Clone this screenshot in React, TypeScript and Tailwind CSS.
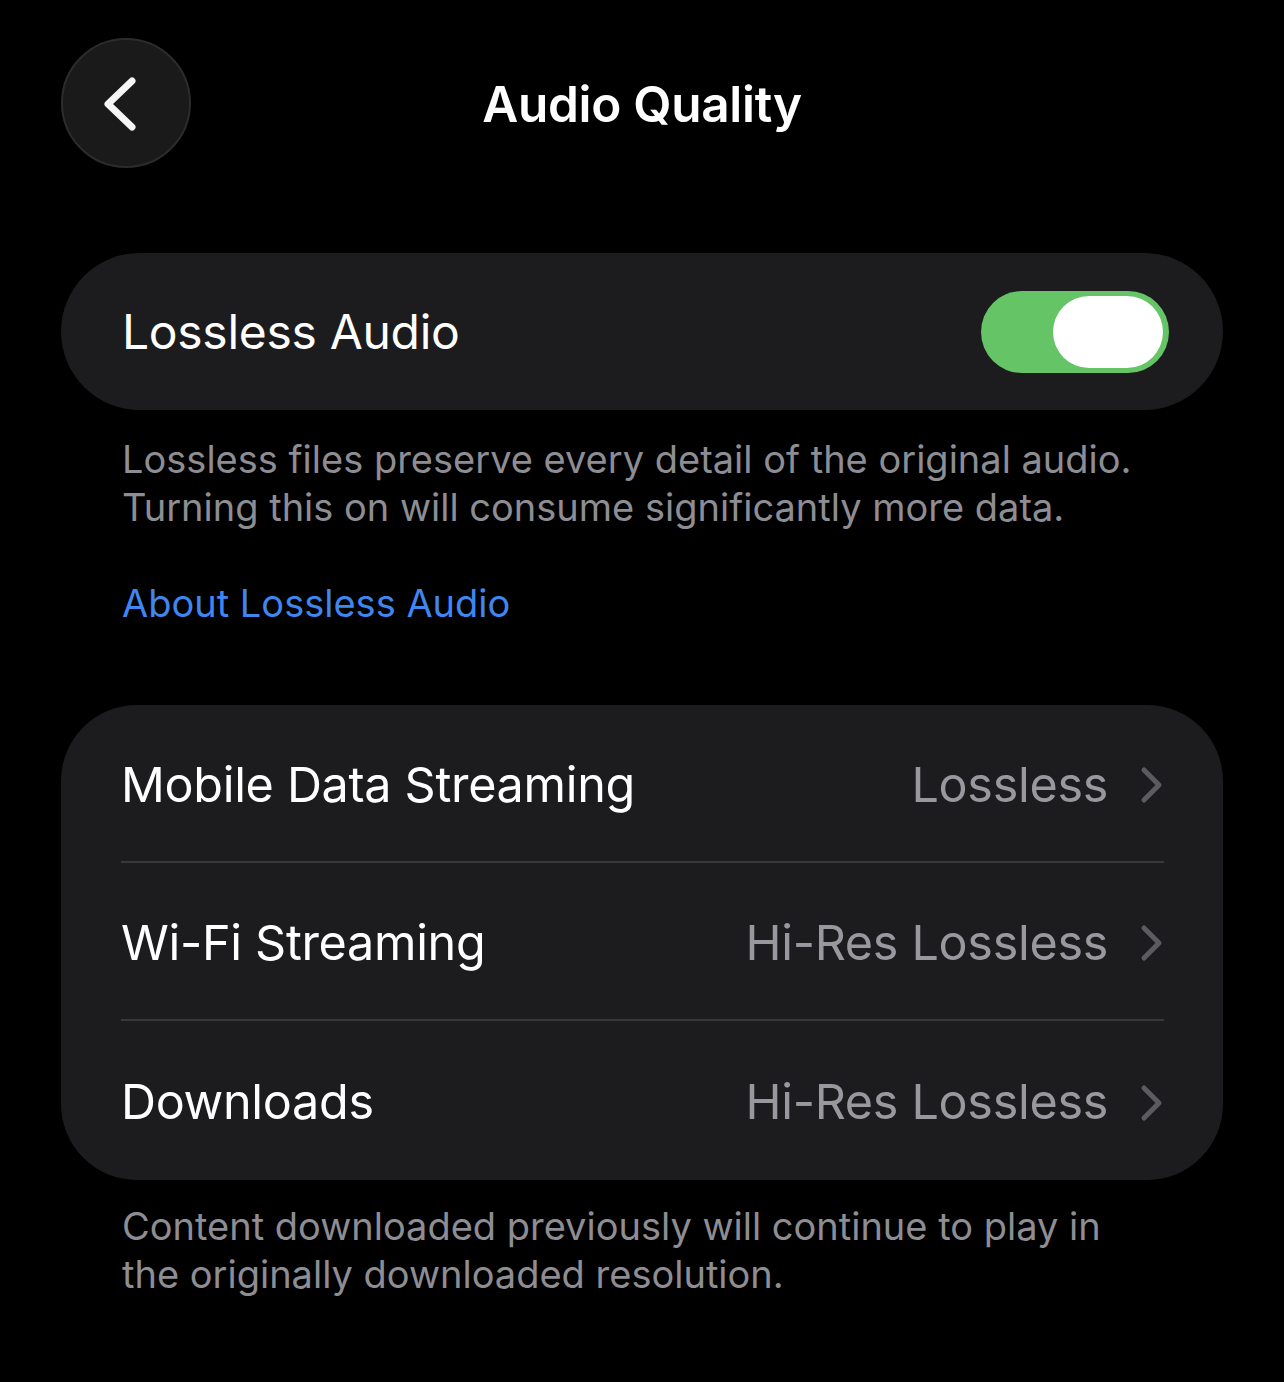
const font = { fontFamily: '"Inter", "Noto Sans", sans-serif' };

function Chevron() {
  return (
    <svg width="24" height="38" viewBox="0 0 24 38" fill="none" className="ml-[32px]">
      <path d="M4 4 L19 19 L4 34" stroke="#5b5b60" strokeWidth="5" strokeLinecap="round" strokeLinejoin="round" />
    </svg>
  );
}

function Row({ label, value, last }: { label: string; value: string; last?: boolean }) {
  return (
    <div className={"ml-[60px] mr-[59px] flex items-center pt-[4px] " + (last ? "h-[159px]" : "h-[158px] border-b-2 border-[#38383a]")}>
      <span className="flex-1 text-[48.5px] tracking-[-0.3px] text-white">{label}</span>
      <span className="text-[48.5px] tracking-[-0.3px] text-[#98989e]">{value}</span>
      <Chevron />
    </div>
  );
}

export default function App() {
  return (
    <div className="min-h-[1382px] w-[1284px] bg-black" style={font}>
      <div className="relative flex h-[206px] items-start justify-center pt-[38px]">
        <button className="absolute left-[61px] top-[38px] flex h-[130px] w-[130px] items-center justify-center rounded-full border-2 border-[#2c2c2e] bg-[#1a1a1a]">
          <svg width="40" height="60" viewBox="0 0 40 60" fill="none" className="-ml-[8px]">
            <path d="M30 8 L6 31 L30 54" stroke="#f5f5f5" strokeWidth="7" strokeLinecap="round" strokeLinejoin="round" />
          </svg>
        </button>
        <h1 className="mt-[37px] text-[49.5px] font-semibold leading-[58px] tracking-[-0.3px] text-white">Audio Quality</h1>
      </div>

      <div className="mx-[61px] mt-[47px] flex h-[157px] items-center rounded-[79px] bg-[#1c1c1e] pl-[61px] pr-[54px]">
        <span className="flex-1 text-[48px] tracking-[-0.3px] text-white">Lossless Audio</span>
        <div className="flex h-[82px] w-[188px] items-center justify-end rounded-full bg-[#65c466] pr-[6px]">
          <div className="h-[72px] w-[110px] rounded-full bg-white" />
        </div>
      </div>

      <div className="mx-[122px] mt-[25px] text-[38px] leading-[48px] text-[#8d8d93]">
        <p>Lossless files preserve every detail of the original audio.</p>
        <p>Turning this on will consume significantly more data.</p>
        <p className="mt-[48px] text-[#3f86f0]">About Lossless Audio</p>
      </div>

      <div className="mx-[61px] mt-[78px] overflow-hidden rounded-[76px] bg-[#1c1c1e]">
        <Row label="Mobile Data Streaming" value="Lossless" />
        <Row label="Wi-Fi Streaming" value="Hi-Res Lossless" />
        <Row label="Downloads" value="Hi-Res Lossless" last />
      </div>

      <div className="mx-[122px] mt-[22px] text-[38px] leading-[48px] text-[#8d8d93]">
        <p>Content downloaded previously will continue to play in</p>
        <p>the originally downloaded resolution.</p>
      </div>
    </div>
  );
}
